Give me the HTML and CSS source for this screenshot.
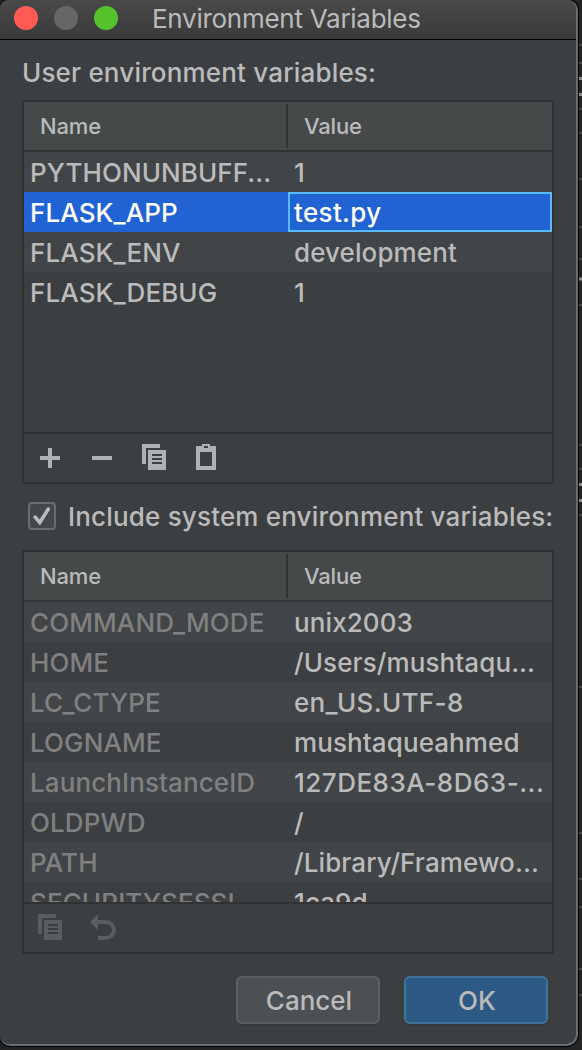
FILE: index.html
```html
<!DOCTYPE html>
<html lang="en">
<head>
    <meta charset="UTF-8">
    <meta name="viewport" content="width=device-width, initial-scale=1.0">
    <title>Environment Variables</title>
    <link rel="stylesheet" href="styles.css">
</head>
<body>
    <div class="dialog">
        <div class="titlebar">
            <span class="dot red"></span>
            <span class="dot grey"></span>
            <span class="dot green"></span>
            <h1>Environment Variables</h1>
        </div>
        <div class="content">
            <div class="label">User environment variables:</div>

            <div class="panel user">
                <div class="row header"><div>Name</div><div>Value</div></div>
                <div class="rows">
                    <div class="row"><div>PYTHONUNBUFF...</div><div>1</div></div>
                    <div class="row selected"><div>FLASK_APP</div><div class="wide">test.py</div></div>
                    <div class="row"><div>FLASK_ENV</div><div>development</div></div>
                    <div class="row"><div>FLASK_DEBUG</div><div>1</div></div>
                </div>
                <div class="toolbar">
                    <svg width="32" height="32" viewBox="0 0 32 32"><path d="M14 6h4v8h8v4h-8v8h-4v-8H6v-4h8z"/></svg>
                    <svg width="32" height="32" viewBox="0 0 32 32"><path d="M6 14h20v4H6z"/></svg>
                    <svg width="32" height="32" viewBox="0 0 32 32"><path d="M4 2h18v4H8v16H4z"/><path fill-rule="evenodd" d="M10 8h18v20H10zM14 12v2h10v-2zM14 16v2h10v-2zM14 20v2h10v-2z"/></svg>
                    <svg width="32" height="32" viewBox="0 0 32 32"><path fill-rule="evenodd" d="M6 4h6V2h8v2h6v24H6zM10 10v14h12V10zM14 4v2h4V4z"/></svg>
                </div>
            </div>

            <div class="check-line">
                <span class="checkbox">
                    <svg width="24" height="24" viewBox="0 0 24 24"><path d="M5 13l4.8 5.5L18.3 5"/></svg>
                </span>
                <span class="check-text">Include system environment variables:</span>
            </div>

            <div class="panel system">
                <div class="row header"><div>Name</div><div>Value</div></div>
                <div class="rows">
                    <div class="row"><div>COMMAND_MODE</div><div>unix2003</div></div>
                    <div class="row"><div>HOME</div><div>/Users/mushtaqu...</div></div>
                    <div class="row"><div>LC_CTYPE</div><div class="wide">en_US.UTF-8</div></div>
                    <div class="row"><div>LOGNAME</div><div>mushtaqueahmed</div></div>
                    <div class="row"><div>LaunchInstanceID</div><div class="uuid">127DE83A-8D63-...</div></div>
                    <div class="row"><div>OLDPWD</div><div>/</div></div>
                    <div class="row"><div>PATH</div><div>/Library/Framewo...</div></div>
                    <div class="row"><div>SECURITYSESSI...</div><div>1ca9d</div></div>
                </div>
                <div class="toolbar disabled">
                    <svg width="32" height="32" viewBox="0 0 32 32"><path d="M4 2h18v4H8v16H4z"/><path fill-rule="evenodd" d="M10 8h18v20H10zM14 12v2h10v-2zM14 16v2h10v-2zM14 20v2h10v-2z"/></svg>
                    <svg width="32" height="32" viewBox="0 0 32 32"><path d="M4 10l8-8v6h8a10 10 0 0 1 0 20h-8v-4h8a6 6 0 0 0 0-12h-8v6z"/></svg>
                </div>
            </div>

            <div class="buttons">
                <button>Cancel</button>
                <button class="primary">OK</button>
            </div>
        </div>
    </div>
    <!-- sliver of the editor window behind the dialog -->
    <svg class="behind" width="3" height="1050" viewBox="0 0 3 1050">
        <path stroke="#454747" stroke-width="2" d="M0 45h3M0 63h3M0 109h3M0 133h3M0 179h3M0 227h3M0 259h3M0 305h3M0 445h3M0 469h3M0 515h3M0 687h3M0 833h3M0 879h3M0 907h3M0 969h3M0 995h3"/>
        <path stroke="#8d8f8f" stroke-width="3" d="M0 78.5h3M0 94.5h3M0 279h3M0 484.5h3M0 500.5h3"/>
    </svg>
</body>
</html>
```
FILE: styles.css
```css
* {
    box-sizing: border-box;
}
body {
    margin: 0;
    width: 582px;
    height: 1050px;
    display: flex;
    overflow: hidden;
    background-color: #222425;
    font-family: Inter, "Liberation Sans", sans-serif;
    font-size: 26px;
    font-weight: 450;
    color: #bbbbbb;
}
.dialog {
    width: 578px;
    height: 1046px;
    flex-shrink: 0;
    background-color: #3c3f41;
    border-right: 2px solid #6a6c6d;
    border-bottom: 2px solid #6a6c6d;
    border-radius: 8px 10px 12px 10px;
    box-shadow: 0 0 0 1px #000;
    overflow: hidden;
}
.titlebar {
    height: 40px;
    display: flex;
    align-items: center;
    padding: 0 0 3px 14px;
    background: linear-gradient(#49494a, #3a3a3b);
    border-bottom: 1px solid #000;
}
.dot {
    width: 24px;
    height: 24px;
    border-radius: 50%;
    margin-right: 16px;
}
.red {
    background-color: #ff5b52;
}
.grey {
    background-color: #666668;
}
.green {
    background-color: #53c22b;
}
h1 {
    margin: 0 0 0 18px;
    font-size: 26px;
    font-weight: 400;
    letter-spacing: -0.27px;
    white-space: nowrap;
}
.content {
    padding: 16px 22px 0;
}
.label {
    height: 34px;
    line-height: 34px;
    margin-bottom: 10px;
    letter-spacing: 0.18px;
    white-space: nowrap;
}
.panel {
    width: 532px;
    border: 2px solid #323232;
    display: flex;
    flex-direction: column;
}
.user {
    height: 384px;
}
.system {
    height: 404px;
}
.row {
    height: 40px;
    line-height: 42px;
    display: grid;
    grid-template-columns: 264px 264px;
    flex-shrink: 0;
    white-space: nowrap;
}
.row > div {
    padding-left: 6px;
    overflow: hidden;
}
.rows .row > div {
    letter-spacing: 0.1px;
}
.rows .row > div.wide {
    letter-spacing: 0.35px;
}
.rows .row > div.uuid {
    letter-spacing: 0.5px;
}
.row:nth-child(odd) {
    background-color: #414547;
}
.header.row {
    height: 50px;
    line-height: 48px;
    font-size: 22px;
    letter-spacing: -0.15px;
    background-color: #45494a;
    border-bottom: 2px solid #323435;
}
.header > div {
    padding-left: 16px;
}
.header > div:first-child {
    height: 44px;
    margin-top: 2px;
    line-height: 44px;
    border-right: 2px solid #323435;
}
.rows {
    flex: 1;
    min-height: 0;
    overflow: hidden;
}
.row.selected {
    background-color: #2163d2;
    color: #fff;
}
.selected > div:last-child {
    border: 2px solid #5ab9fb;
    padding-left: 4px;
    line-height: 38px;
}
.system .rows .row > div:first-child {
    color: #808080;
}
.toolbar {
    height: 50px;
    border-top: 2px solid #323232;
    display: flex;
    align-items: center;
    gap: 20px;
    padding-left: 10px;
    fill: #afb1b3;
}
.disabled {
    fill: #5b5c5d;
}
.check-line {
    height: 66px;
    display: flex;
    align-items: center;
    padding-left: 6px;
    letter-spacing: 0.18px;
    white-space: nowrap;
}
.check-text {
    padding-bottom: 1px;
}
.checkbox {
    width: 28px;
    height: 28px;
    margin-right: 12px;
    border: 2px solid #6b6b6b;
    border-radius: 4px;
    background-color: #43494a;
    position: relative;
    top: -1px;
}
.checkbox svg {
    display: block;
    fill: none;
    stroke: #bbbbbb;
    stroke-width: 3.5;
    stroke-linecap: round;
}
.buttons {
    display: flex;
    justify-content: flex-end;
    gap: 24px;
    padding-right: 6px;
    margin-top: 22px;
}
button {
    width: 144px;
    height: 48px;
    padding: 0 0 0 2px;
    font: inherit;
    color: #bbbbbb;
    background-color: #4c5052;
    border: 2px solid #5e6060;
    border-radius: 6px;
    box-shadow: 0 2px 1px #36393a;
}
button.primary {
    background-color: #2d5985;
    border-color: #41749a;
}
.behind {
    margin-left: 1px;
}
```
